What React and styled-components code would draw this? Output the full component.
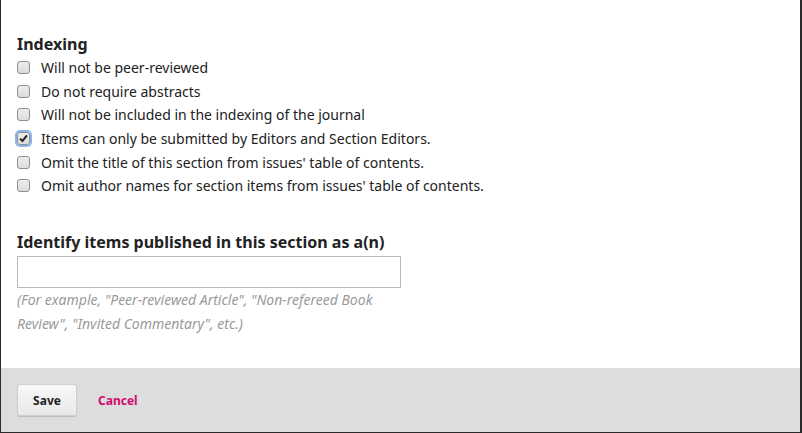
import React from "react";
import styled, { createGlobalStyle } from "styled-components";

const GlobalStyle = createGlobalStyle`
  html, body {
    margin: 0;
    padding: 0;
    background: #fff;
  }
  body {
    font-family: "Noto Sans", "Liberation Sans", sans-serif;
    color: #222;
  }
`;

const options = [
  { label: "Will not be peer-reviewed", checked: false },
  { label: "Do not require abstracts", checked: false },
  { label: "Will not be included in the indexing of the journal", checked: false },
  { label: "Items can only be submitted by Editors and Section Editors.", checked: true },
  { label: "Omit the title of this section from issues' table of contents.", checked: false },
  { label: "Omit author names for section items from issues' table of contents.", checked: false },
];

export default function App() {
  return (
    <>
      <GlobalStyle />
      <Modal>
        <Body>
          <Section>
            <Heading>Indexing</Heading>
            <List>
              {options.map((o) => (
                <Row key={o.label}>
                  <Check checked={o.checked}>
                    {o.checked && (
                      <svg width="9" height="9" viewBox="0 0 9 9">
                        <path d="M1 4.6 L3.4 7 L8 1.4" fill="none" stroke="#222" strokeWidth="2" />
                      </svg>
                    )}
                  </Check>
                  <Label>{o.label}</Label>
                </Row>
              ))}
            </List>
          </Section>
          <Section second>
            <Heading>Identify items published in this section as a(n)</Heading>
            <Input type="text" />
            <Help>
              (For example, "Peer-reviewed Article", "Non-refereed Book
              <br />
              Review", "Invited Commentary", etc.)
            </Help>
          </Section>
        </Body>
        <Footer>
          <SaveButton>Save</SaveButton>
          <CancelLink href="#">Cancel</CancelLink>
        </Footer>
      </Modal>
    </>
  );
}

const Modal = styled.div`
  box-sizing: border-box;
  width: 802px;
  height: 433px;
  display: flex;
  flex-direction: column;
  border-left: 1px solid #2b2b2b;
  border-right: 2px solid #2b2b2b;
  border-bottom: 1px solid #2b2b2b;
  background: #fff;
`;

const Body = styled.div`
  flex: 1;
  padding: 32px 16px 0 16px;
`;

const Section = styled.section`
  margin-top: ${(p) => (p.second ? "32px" : "0")};
`;

const Heading = styled.h3`
  margin: 0;
  font-size: 16px;
  font-weight: 700;
  line-height: 24px;
  color: #222;
`;

const List = styled.ul`
  list-style: none;
  margin: 0;
  padding: 0;
`;

const Row = styled.li`
  display: flex;
  align-items: center;
  height: 23.6px;
`;

const Check = styled.span`
  box-sizing: border-box;
  width: 13px;
  height: 13px;
  margin-right: 11px;
  border-radius: 3px;
  border: 1px solid #8f8f8f;
  background: linear-gradient(#ededed, #dcdcdc);
  display: flex;
  align-items: center;
  justify-content: center;
  box-shadow: ${(p) => (p.checked ? "0 0 0 2px #8ab4f0" : "none")};
`;

const Label = styled.span`
  font-size: 14px;
  color: #222;
`;

const Input = styled.input`
  box-sizing: border-box;
  display: block;
  width: 384px;
  height: 32px;
  margin: 2px 0 0;
  border: 1px solid #bbb;
  background: #fff;
  font-family: inherit;
  font-size: 14px;
  outline: none;
`;

const Help = styled.p`
  margin: 0;
  font-size: 14px;
  font-style: italic;
  line-height: 24px;
  color: #9a9a9a;
`;

const Footer = styled.div`
  height: 64px;
  background: #ddd;
  display: flex;
  align-items: center;
  padding: 0 16px;
`;

const SaveButton = styled.button`
  box-sizing: border-box;
  width: 60px;
  height: 32px;
  border: 1px solid #cfcfcf;
  border-radius: 3px;
  background: linear-gradient(#f8f8f8, #e8e8e8);
  box-shadow: 0 1px 1px rgba(0, 0, 0, 0.15);
  font-family: inherit;
  font-size: 12px;
  font-weight: 700;
  color: #222;
  cursor: pointer;
`;

const CancelLink = styled.a`
  margin-left: 21px;
  font-size: 12px;
  font-weight: 700;
  color: #d00a6c;
  text-decoration: none;
`;
